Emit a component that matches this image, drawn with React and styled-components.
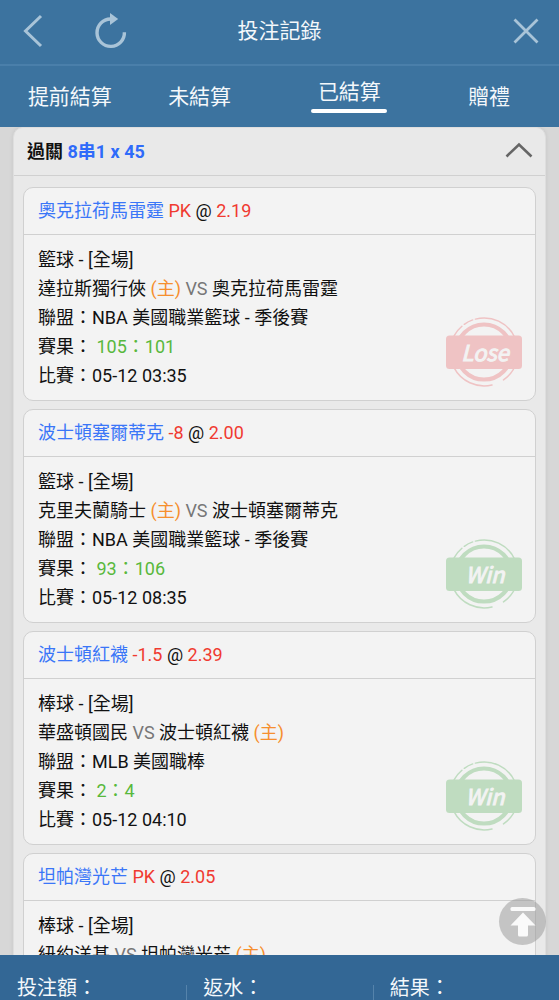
import React, { useRef, useState } from "react";
import styled, { createGlobalStyle } from "styled-components";

const tabs = [
  { id: "early", label: "提前結算" },
  { id: "open", label: "未結算", counted: true },
  { id: "settled", label: "已結算" },
  { id: "gift", label: "贈禮" },
];

const bets = [
  {
    pick: "奧克拉荷馬雷霆",
    line: "PK",
    odds: "2.19",
    sport: "籃球 - [全場]",
    teams: ["達拉斯獨行俠", "奧克拉荷馬雷霆"],
    host: 0,
    league: "NBA 美國職業籃球 - 季後賽",
    score: "105：101",
    time: "05-12 03:35",
    result: "Lose",
  },
  {
    pick: "波士頓塞爾蒂克",
    line: "-8",
    odds: "2.00",
    sport: "籃球 - [全場]",
    teams: ["克里夫蘭騎士", "波士頓塞爾蒂克"],
    host: 0,
    league: "NBA 美國職業籃球 - 季後賽",
    score: "93：106",
    time: "05-12 08:35",
    result: "Win",
  },
  {
    pick: "波士頓紅襪",
    line: "-1.5",
    odds: "2.39",
    sport: "棒球 - [全場]",
    teams: ["華盛頓國民", "波士頓紅襪"],
    host: 1,
    league: "MLB 美國職棒",
    score: "2：4",
    time: "05-12 04:10",
    result: "Win",
  },
  {
    pick: "坦帕灣光芒",
    line: "PK",
    odds: "2.05",
    sport: "棒球 - [全場]",
    teams: ["紐約洋基", "坦帕灣光芒"],
    host: 1,
  },
];

const Stamp = ({ result }) => {
  const color = result === "Win" ? "#bfdcc0" : "#efc3c4";
  return (
    <StampSvg viewBox="0 0 78 70" role="img" aria-label={result}>
      <g fill="none" stroke={color}>
        <circle cx="39" cy="35" r="27.5" strokeWidth="4.2" />
        <path
          strokeWidth="1.5"
          strokeLinecap="round"
          d="M30.4 2.1A34 34 0 0 1 58.5 62.9M47 68A34 34 0 0 1 16.9 9.2M19.3 7.3A34 34 0 0 1 27.7 2.9"
        />
      </g>
      <rect x="1" y="18.5" width="76" height="33.5" rx="3.5" fill={color} />
      <StampText x="40" y="43.5" textAnchor="middle">
        {result}
      </StampText>
    </StampSvg>
  );
};

const BetCard = ({ bet }) => (
  <Card>
    <CardHead>
      <Pick>{bet.pick}</Pick> <Odds>{bet.line}</Odds> @ <Odds>{bet.odds}</Odds>
    </CardHead>
    <CardBody>
      <Lines>
        <p>{bet.sport}</p>
        <p>
          {bet.teams[0]} {bet.host === 0 && <Host>(主) </Host>}
          <Versus>VS</Versus> {bet.teams[1]}
          {bet.host === 1 && <Host> (主)</Host>}
        </p>
        {bet.league && <p>聯盟：{bet.league}</p>}
        {bet.score && (
          <p>
            賽果： <Score>{bet.score}</Score>
          </p>
        )}
        {bet.time && <p>比賽：{bet.time}</p>}
      </Lines>
      {bet.result && <Stamp result={bet.result} />}
    </CardBody>
  </Card>
);

const App = () => {
  const [tab, setTab] = useState("settled");
  const [open, setOpen] = useState(true);
  const listRef = useRef(null);

  return (
    <Page>
      <GlobalStyle />
      <TopBar>
        <IconGroup>
          <IconButton aria-label="返回">
            <svg width="20" height="34" viewBox="0 0 20 34">
              <path d="M18 2L2.5 17L18 32" fill="none" stroke="currentColor" strokeWidth="3" />
            </svg>
          </IconButton>
          <IconButton aria-label="重新整理">
            <svg width="32" height="36" viewBox="0 0 32 36">
              <path
                d="M29.4 19.2A13.7 13.7 0 1 1 15.5 6"
                fill="none"
                stroke="currentColor"
                strokeWidth="3.4"
              />
              <path d="M15 0L23.2 6L15 12Z" fill="currentColor" />
            </svg>
          </IconButton>
        </IconGroup>
        <Title>投注記錄</Title>
        <IconGroup $end>
          <IconButton aria-label="關閉">
            <svg width="26" height="26" viewBox="0 0 26 26">
              <path d="M1.5 1.5L24.5 24.5M24.5 1.5L1.5 24.5" stroke="currentColor" strokeWidth="2.8" />
            </svg>
          </IconButton>
        </IconGroup>
      </TopBar>
      <Tabs>
        {tabs.map((item) => (
          <Tab
            key={item.id}
            $active={item.id === tab}
            $counted={item.counted}
            onClick={() => setTab(item.id)}
          >
            {item.label}
          </Tab>
        ))}
      </Tabs>
      <Content>
        <Scroller ref={listRef}>
          <Panel>
            <PanelHead onClick={() => setOpen(!open)} aria-expanded={open}>
              <span>
                過關 <Combo>8串1 x 45</Combo>
              </span>
              <Arrow $open={open} width="28" height="16" viewBox="0 0 28 16">
                <path d="M1.5 14.5L14 2.5L26.5 14.5" fill="none" stroke="#666" strokeWidth="2.6" />
              </Arrow>
            </PanelHead>
            {open && (
              <BetList>
                {bets.map((bet) => (
                  <BetCard key={bet.pick} bet={bet} />
                ))}
              </BetList>
            )}
          </Panel>
        </Scroller>
        <TopButton
          aria-label="回到頂部"
          onClick={() => listRef.current.scrollTo({ top: 0, behavior: "smooth" })}
        >
          <svg width="26" height="30" viewBox="0 0 26 30" fill="#fafafa">
            <rect x="0.5" y="0" width="25" height="4" rx="1.5" />
            <path d="M13 5.5L25.5 18.5H18V28Q18 29.5 16.5 29.5H9.5Q8 29.5 8 28V18.5H0.5Z" />
          </svg>
        </TopButton>
      </Content>
      <Summary>
        <Total>投注額：</Total>
        <Total>返水：</Total>
        <Total>結果：</Total>
      </Summary>
    </Page>
  );
};

export default App;

const GlobalStyle = createGlobalStyle`
  * {
    box-sizing: border-box;
  }
  body {
    margin: 0;
    font-family: Roboto, "Noto Sans CJK TC", sans-serif;
    font-size: 18px;
    color: #111;
  }
  p, h1 {
    margin: 0;
  }
  button {
    padding: 0;
    border: 0;
    background: none;
    font: inherit;
    color: inherit;
    cursor: pointer;
  }
  svg {
    display: block;
  }
`;
const Page = styled.div`
  display: flex;
  flex-direction: column;
  height: 100vh;
  background: #d7d7d7;
`;
const TopBar = styled.header`
  display: grid;
  grid-template-columns: 1fr auto 1fr;
  align-items: center;
  padding: 13px 20px 15px;
  background: #3c739f;
  border-bottom: 2px solid #4a7faa;
`;
const IconGroup = styled.div`
  display: flex;
  align-items: center;
  justify-content: ${(props) => (props.$end ? "flex-end" : "flex-start")};
  gap: 0 52px;
  padding: ${(props) => (props.$end ? "0" : "0 3px")};
`;
const IconButton = styled.button`
  color: #a9c4d8;
`;
const Title = styled.h1`
  font-size: 21px;
  font-weight: 400;
  line-height: 36px;
  color: #f4f8fb;
`;
const Tabs = styled.nav`
  display: grid;
  grid-template-columns: repeat(4, 1fr);
  align-items: center;
  height: 61px;
  background: #3c739f;
`;
const Tab = styled.button`
  display: flex;
  flex-direction: column;
  align-items: center;
  gap: 5px;
  padding-right: ${(props) => (props.$counted ? "20px" : "0")};
  font-size: 21px;
  line-height: 24px;
  color: #f4f8fb;
  &::after {
    content: "";
    display: ${(props) => (props.$active ? "block" : "none")};
    width: 76px;
    height: 4px;
    border-radius: 2px;
    background: #fff;
  }
`;
const Content = styled.main`
  position: relative;
  flex: 1;
  min-height: 0;
`;
const Scroller = styled.div`
  height: 100%;
  padding: 0 13px;
  overflow-y: auto;
  scrollbar-width: none;
`;
const Panel = styled.section`
  border: 1px solid #dedede;
  border-radius: 10px 10px 0 0;
  background: #e9e9e9;
  box-shadow: 0 0 4px rgba(0, 0, 0, 0.08);
`;
const PanelHead = styled.button`
  display: flex;
  align-items: center;
  justify-content: space-between;
  width: 100%;
  height: 48px;
  padding: 0 12px 3px 13px;
  border-bottom: 1px solid #d0d0d0;
  font-weight: 700;
`;
const Combo = styled.span`
  color: #2f6bfa;
`;
const Arrow = styled.svg`
  transform: ${(props) => (props.$open ? "none" : "rotate(180deg)")};
`;
const BetList = styled.div`
  display: flex;
  flex-direction: column;
  gap: 8px;
  padding: 11px 9px;
`;
const Card = styled.article`
  border: 1px solid #d0d0d0;
  border-radius: 10px;
  background: #f3f3f3;
`;
const CardHead = styled.div`
  padding: 0 14px;
  border-bottom: 1px solid #d0d0d0;
  line-height: 46px;
`;
const Pick = styled.span`
  color: #3a76f8;
`;
const Odds = styled.span`
  color: #f03a30;
`;
const CardBody = styled.div`
  display: flex;
  align-items: flex-end;
  justify-content: space-between;
  padding: 10px 12px 10px 14px;
`;
const Lines = styled.div`
  line-height: 29px;
`;
const Host = styled.span`
  color: #f68f2e;
`;
const Versus = styled.span`
  color: #777;
`;
const Score = styled.span`
  color: #58b83c;
`;
const StampSvg = styled.svg`
  flex: none;
  width: 78px;
  height: 70px;
  margin-bottom: 3px;
`;
const StampText = styled.text`
  font-family: "Noto Sans CJK TC", "Noto Sans", sans-serif;
  font-size: 22px;
  font-style: italic;
  fill: #f3f3f3;
  stroke: #f3f3f3;
  stroke-width: 1px;
`;
const TopButton = styled.button`
  position: absolute;
  right: 13px;
  bottom: 10px;
  display: flex;
  align-items: center;
  justify-content: center;
  width: 47px;
  height: 47px;
  border-radius: 50%;
  background: rgba(150, 150, 150, 0.5);
`;
const Summary = styled.footer`
  display: grid;
  grid-template-columns: repeat(3, 1fr);
  height: 45px;
  background: #336795;
`;
const Total = styled.div`
  position: relative;
  padding: 21px 0 0 17px;
  font-size: 20px;
  line-height: 24px;
  color: #f4f8fb;
  & + &::before {
    content: "";
    position: absolute;
    top: 30px;
    bottom: 0;
    left: 0;
    width: 1px;
    background: #5583ab;
  }
`;
